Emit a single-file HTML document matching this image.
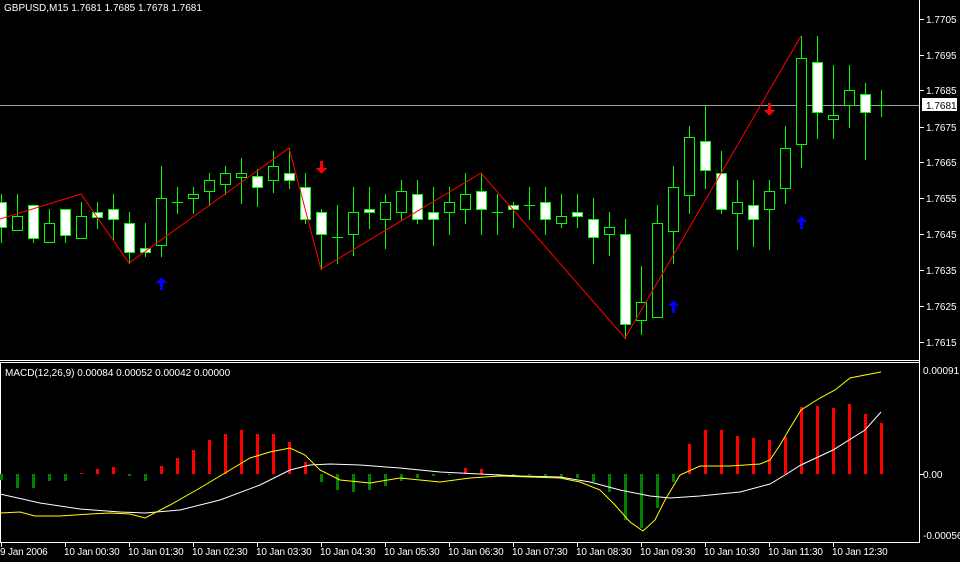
<!DOCTYPE html>
<html><head><meta charset="utf-8"><style>
html,body{margin:0;padding:0;background:#000;}
svg{display:block}
text{font-family:"Liberation Sans",sans-serif;font-size:10px;fill:#fff}
</style></head><body>
<svg id="s" width="960" height="562" viewBox="0 0 960 562" xmlns="http://www.w3.org/2000/svg" shape-rendering="crispEdges">
<rect width="960" height="562" fill="#000"/>
<!-- frames -->
<line x1="0" y1="360.5" x2="920" y2="360.5" stroke="#fff"/>
<line x1="0" y1="362.5" x2="920" y2="362.5" stroke="#fff"/>
<line x1="0" y1="542.5" x2="920" y2="542.5" stroke="#fff"/>
<line x1="919.5" y1="0" x2="919.5" y2="543" stroke="#fff"/>
<line x1="0.5" y1="362" x2="0.5" y2="543" stroke="#fff"/>
<!-- current price line -->
<line x1="0" y1="105.5" x2="919" y2="105.5" stroke="#a0a0a0"/>
<g id="cd"></g>
<!-- zigzag -->
<polyline shape-rendering="auto" fill="none" stroke="#f00" stroke-width="1" points="0,219 81,194 129,263 289,148 321,269 481,173 625,338 801,36"/>
<!-- arrows -->
<g id="ar"></g>
<!-- MACD -->
<g id="hist"></g>
<polyline shape-rendering="auto" fill="none" stroke="#fff" stroke-width="1" points="0,494 40,503 80,509 120,512 145,513 180,510 220,500 260,485 290,470 310,465 330,464 360,465 400,468 440,472 480,474 520,476 560,477 590,482 620,490 650,496 670,498 700,496 740,492 770,484 785,475 801,465 833,450 865,430 881,412"/>
<polyline shape-rendering="auto" fill="none" stroke="#ff0" stroke-width="1" points="0,513 20,512 35,516 60,516 90,514 110,513 130,514 145,518 170,505 200,488 230,470 250,458 270,452 290,448 305,455 320,470 340,480 370,483 400,478 420,480 440,482 470,478 500,476 530,477 560,478 580,482 600,490 615,505 630,522 643,531 655,520 665,500 680,475 700,466 730,466 760,464 770,460 780,445 790,428 801,410 820,398 835,390 850,378 865,375 881,372"/>
<!-- right axis ticks -->
<g stroke="#fff">
<line x1="920" y1="19.5" x2="924" y2="19.5"/><line x1="920" y1="55.5" x2="924" y2="55.5"/><line x1="920" y1="90.5" x2="924" y2="90.5"/><line x1="920" y1="127.5" x2="924" y2="127.5"/><line x1="920" y1="162.5" x2="924" y2="162.5"/><line x1="920" y1="198.5" x2="924" y2="198.5"/><line x1="920" y1="234.5" x2="924" y2="234.5"/><line x1="920" y1="270.5" x2="924" y2="270.5"/><line x1="920" y1="306.5" x2="924" y2="306.5"/><line x1="920" y1="342.5" x2="924" y2="342.5"/>
<line x1="920" y1="474.5" x2="924" y2="474.5"/>
</g>
<text x="926" y="23">1.7705</text>
<text x="926" y="59">1.7695</text>
<text x="926" y="94">1.7685</text>
<text x="926" y="131">1.7675</text>
<text x="926" y="166">1.7665</text>
<text x="926" y="202">1.7655</text>
<text x="926" y="238">1.7645</text>
<text x="926" y="274">1.7635</text>
<text x="926" y="310">1.7625</text>
<text x="926" y="346">1.7615</text>
<rect x="922" y="98" width="35" height="13" fill="#fff"/>
<text x="926" y="109" style="fill:#000">1.7681</text>
<text x="923" y="374">0.00091</text>
<text x="923" y="478">0.00</text>
<text x="923" y="539">-0.00056</text>
<!-- bottom axis -->
<g stroke="#fff">
<line x1="1.5" y1="543" x2="1.5" y2="547"/><line x1="65.5" y1="543" x2="65.5" y2="547"/><line x1="129.5" y1="543" x2="129.5" y2="547"/><line x1="193.5" y1="543" x2="193.5" y2="547"/><line x1="257.5" y1="543" x2="257.5" y2="547"/><line x1="321.5" y1="543" x2="321.5" y2="547"/><line x1="385.5" y1="543" x2="385.5" y2="547"/><line x1="449.5" y1="543" x2="449.5" y2="547"/><line x1="513.5" y1="543" x2="513.5" y2="547"/><line x1="577.5" y1="543" x2="577.5" y2="547"/><line x1="641.5" y1="543" x2="641.5" y2="547"/><line x1="705.5" y1="543" x2="705.5" y2="547"/><line x1="769.5" y1="543" x2="769.5" y2="547"/><line x1="833.5" y1="543" x2="833.5" y2="547"/>
</g>
<g style="letter-spacing:-0.2px">
<text x="0" y="555">9 Jan 2006</text>
<text x="64" y="555">10 Jan 00:30</text>
<text x="128" y="555">10 Jan 01:30</text>
<text x="192" y="555">10 Jan 02:30</text>
<text x="256" y="555">10 Jan 03:30</text>
<text x="320" y="555">10 Jan 04:30</text>
<text x="384" y="555">10 Jan 05:30</text>
<text x="448" y="555">10 Jan 06:30</text>
<text x="512" y="555">10 Jan 07:30</text>
<text x="576" y="555">10 Jan 08:30</text>
<text x="640" y="555">10 Jan 09:30</text>
<text x="704" y="555">10 Jan 10:30</text>
<text x="768" y="555">10 Jan 11:30</text>
<text x="832" y="555">10 Jan 12:30</text>
</g>
<text x="4" y="11">GBPUSD,M15  1.7681 1.7685 1.7678 1.7681</text>
<text x="5" y="376">MACD(12,26,9) 0.00084 0.00052 0.00042 0.00000</text>
</svg>
<script>
var NS="http://www.w3.org/2000/svg";
function el(p,t,a){var e=document.createElementNS(NS,t);for(var k in a)e.setAttribute(k,a[k]);p.appendChild(e);return e;}
// [high, bodyTop, bodyBot, low, white]
var C=[[194,202,227,242,1],[194,216,230,230,0],[205,205,238,242,1],[209,223,242,242,0],[209,209,235,242,1],[202,216,238,238,0],[202,212,217,228,1],[194,209,219,240,1],[212,223,252,263,1],[223,248,252,256,1],[166,198,245,256,0],[187,202,202,213,0],[187,194,198,213,0],[173,180,191,205,0],[166,173,184,194,0],[158,173,177,203,0],[169,176,187,206,1],[151,166,180,192,0],[148,173,180,188,1],[173,187,219,223,1],[209,212,234,269,1],[205,237,237,263,0],[187,212,234,255,0],[187,209,212,228,1],[194,202,219,248,0],[180,191,212,219,0],[180,194,219,223,1],[187,212,219,245,1],[187,202,212,234,0],[173,194,209,223,0],[173,191,209,234,1],[194,212,212,234,0],[202,205,209,227,1],[187,205,205,219,0],[187,202,219,234,1],[194,216,223,227,0],[194,212,216,227,1],[198,219,237,263,1],[212,227,234,255,0],[219,234,324,338,1],[266,302,320,334,0],[205,223,317,317,0],[166,187,231,263,0],[126,137,195,213,0],[105,141,170,188,1],[151,173,209,213,1],[180,202,213,249,0],[180,205,219,246,1],[180,191,209,249,0],[126,148,188,203,0],[36,58,144,167,0],[36,62,112,138,1],[65,115,119,138,0],[65,90,105,127,0],[83,94,112,159,1],[90,105,105,116,0]];
var g=document.getElementById("cd");
C.forEach(function(c,k){var x=1+16*k;
el(g,"line",{x1:x+0.5,y1:c[0],x2:x+0.5,y2:c[3]+1,stroke:"#00ff00"});
if(c[1]==c[2]){el(g,"line",{x1:x-5,y1:c[1]+0.5,x2:x+6,y2:c[1]+0.5,stroke:"#00ff00"});}
else el(g,"rect",{x:x-4.5,y:c[1]+0.5,width:10,height:c[2]-c[1],fill:c[4]?"#fff":"#000",stroke:"#00ff00"});
});
// histogram: top/bottom
var H=[[474,480],[474,488],[474,488],[474,481],[474,481],[473,474],[469,474],[467,474],[474,476],[474,481],[466,474],[458,474],[450,474],[440,474],[434,474],[430,474],[434,474],[434,474],[442,474],[462,474],[474,482],[474,490],[474,492],[474,490],[474,486],[474,481],[474,478],[474,476],[474,475],[468,474],[469,474],[474,475],[474,476],[474,475],[474,476],[474,477],[474,478],[474,482],[474,492],[474,520],[474,528],[474,508],[474,482],[444,474],[430,474],[430,474],[436,474],[438,474],[440,474],[437,474],[407,474],[406,474],[408,474],[404,474],[414,474],[423,474]];
var h=document.getElementById("hist");
H.forEach(function(b,k){var x=1+16*k;var red=b[0]<474;
el(h,"rect",{x:x-1,y:b[0],width:3,height:b[1]-b[0],fill:red?"#ff0000":"#008000"});});
var a=document.getElementById("ar");
function up(x,y,c){el(a,"polygon",{points:(x-1)+","+(y+13)+" "+(x-1)+","+(y+6)+" "+(x-5)+","+(y+6)+" "+(x+0.5)+","+y+" "+(x+6)+","+(y+6)+" "+(x+2)+","+(y+6)+" "+(x+2)+","+(y+13),fill:c});}
function dn(x,y,c){el(a,"polygon",{points:(x-1)+","+y+" "+(x-1)+","+(y+7)+" "+(x-5)+","+(y+7)+" "+(x+0.5)+","+(y+13)+" "+(x+6)+","+(y+7)+" "+(x+2)+","+(y+7)+" "+(x+2)+","+y,fill:c});}
up(161,277,"#0000ff");dn(321,161,"#ff0000");up(673,300,"#0000ff");dn(769,103,"#ff0000");up(801,216,"#0000ff");
</script>
</body></html>
